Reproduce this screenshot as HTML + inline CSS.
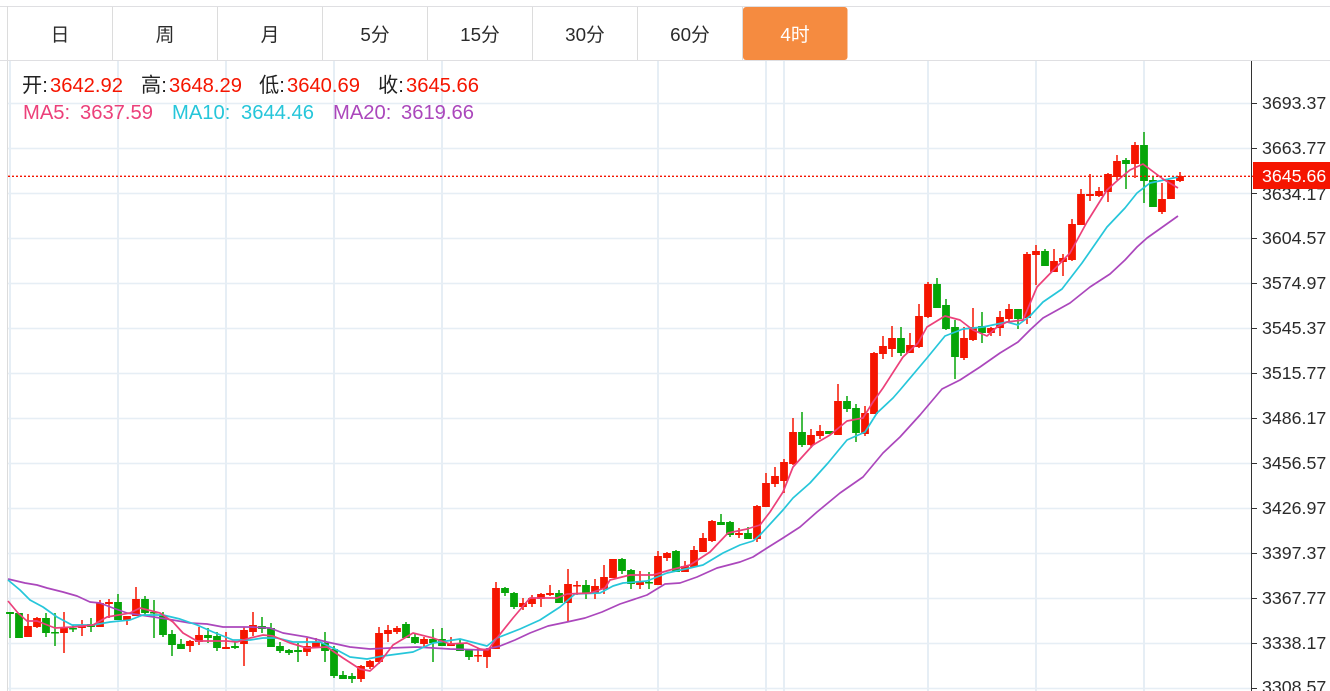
<!DOCTYPE html>
<html><head><meta charset="utf-8"><title>K</title>
<style>
html,body{margin:0;padding:0;background:#fff;width:1330px;height:691px;overflow:hidden}
svg{display:block}
text{font-family:"Liberation Sans","Noto Sans CJK SC",sans-serif}
.t{font-size:18.800px;fill:#2b2b2b;text-anchor:middle}
.a{font-size:17.800px;fill:#2b2b2b}
.h{font-size:20.200px}
</style></head><body>
<svg width="1330" height="691" viewBox="0 0 1330 691" xmlns="http://www.w3.org/2000/svg">
<rect width="1330" height="691" fill="#fff"/>
<!-- grid -->
<path fill="none" stroke="#e6eef5" stroke-width="1.500" d="M8 103.500H1251M8 148.500H1251M8 193.500H1251M8 238.500H1251M8 283.500H1251M8 328.500H1251M8 373.500H1251M8 418.500H1251M8 463.500H1251M8 508.500H1251M8 553.500H1251M8 598.500H1251M8 643.500H1251M8 688.500H1251"/>
<path fill="none" stroke="#e6eef5" stroke-width="2" d="M10 61V691M118 61V691M226 61V691M334 61V691M442 61V691M658 61V691M766 61V691M784 61V691M928 61V691M1036 61V691M1144 61V691"/>
<path fill="none" stroke="#dcdcdc" stroke-width="1" d="M7.500 61V691"/>
<!-- tabs -->
<path fill="none" stroke="#dfdfe2" stroke-width="1" d="M0 6.500H1330M0 60.500H1330"/>
<path fill="none" stroke="#dcdcdc" stroke-width="1" d="M7.500 6V60M112.500 7V60M217.500 7V60M322.500 7V60M427.500 7V60M532.500 7V60M637.500 7V60M742.500 7V60"/>
<rect x="743" y="7" width="104.500" height="53" rx="3" fill="#f58b40"/>
<text class="t" x="60" y="41">日</text>
<text class="t" x="165" y="41">周</text>
<text class="t" x="270" y="41">月</text>
<text class="t" x="375" y="41">5分</text>
<text class="t" x="480" y="41">15分</text>
<text class="t" x="585" y="41">30分</text>
<text class="t" x="690" y="41">60分</text>
<text class="t" x="795" y="41" style="fill:#fff">4时</text>
<!-- wicks -->
<path fill="none" stroke="#06a508" stroke-width="1.500" d="M10 612V638M19 613V638M46 613V637M55 613V646M73 625V632M91 618V632M118 594V620M145 596V615M154 600V638M163 612V637M172 630V656M181 639V649M208 628V643M217 632V651M235 642V649M262 617V633M271 623V647M280 642V653M289 649V655M298 643V662M325 632V662M334 646V678M343 671V679M352 673V683M406 622V638M415 633V644M433 629V662M442 628V646M460 640V651M469 650V660M505 587V596M514 592V609M559 590V603M586 580V599M622 558V574M631 569V589M649 572V589M676 550V572M721 514V525M730 521V537M748 527V539M802 412V447M829 431V434M847 396V412M856 404V442M901 327V356M937 278V308M946 299V330M955 320V379M982 312V343M1018 309V329M1045 249V266M1126 158V189M1144 132V203M1153 177V207"/>
<path fill="none" stroke="#f51500" stroke-width="1.500" d="M28 614V637M37 617V628M64 612V653M82 620V636M100 600V627M109 599V618M127 616V625M136 587V616M190 640V652M199 627V645M226 632V649M244 627V666M253 612V636M307 638V656M316 638V648M361 665V682M370 660V669M379 627V664M388 625V642M397 626V634M424 637V647M451 637V646M478 648V662M487 648V668M496 582V649M523 598V610M532 595V607M541 593V607M550 585V596M568 569V622M577 581V595M595 579V599M604 565V594M613 559V578M640 571V589M658 551V585M667 552V561M685 561V572M694 546V567M703 533V552M712 520V542M739 528V538M757 505V542M766 473V507M775 467V487M784 459V493M793 418V465M811 429V448M820 425V439M838 384V435M865 406V436M874 352V414M883 336V359M892 326V357M910 333V353M919 304V348M928 282V318M964 327V360M973 308V341M991 327V336M1000 311V336M1009 304V322M1027 252V324M1036 245V285M1054 249V272M1063 254V276M1072 219V261M1081 189V225M1090 174V201M1099 187V197M1108 173V202M1117 155V180M1135 142V178M1162 183V214M1171 180V199M1180 172V182"/>
<!-- bodies -->
<path fill="none" stroke="#06a508" stroke-width="7.800" d="M10 612V614M19 613V638M46 618V633M55 632V633.500M73 628V629.500M91 624V627M118 602V620M145 599V613M154 612V613.500M163 615V635M172 634V645M181 644V649M208 635V638M217 636V648M235 646V648M262 626V629M271 628V647M280 646V651M289 650V653M298 650V652M325 643V651M334 649V676M343 675V679M352 676V679M406 624V638M415 637V643M433 639V643M442 639V646M460 644V651M469 650V657M505 588V593M514 593V607M559 593V603M586 585V593M622 559V571M631 570V584M649 582V583.500M676 551V572M721 522V525M730 522V535M748 533V539M802 432V445M829 431V434M847 401V409M856 408V433M901 338V353M937 284V308M946 305V329M955 327V357M982 326V333M1018 309V319M1045 251V266M1126 160V164M1144 145V181M1153 180V207"/>
<path fill="none" stroke="#f51500" stroke-width="7.800" d="M28 626V637M37 618V627M64 627V633M82 625V628M100 603V627M109 602V604M127 616V620M136 599V616M190 641V646M199 635V642M226 647V649M244 630V644M253 625V632M307 646V652M316 642V648M361 666V679M370 661V667M379 633V662M388 630V634M397 628V632M424 639V644M451 643V646M478 655V656.500M487 649V657M496 588V649M523 603V607M532 598V604M541 594V599M550 593V595M568 584V603M577 585V586.500M595 586V593M604 577V589M613 559V578M640 582V585M658 556V585M667 553V558M685 566V572M694 550V567M703 538V552M712 521V541M739 533V535M757 506V539M766 483V507M775 476V484M784 462V481M793 432V464M811 435V445M820 431V436M838 401V435M865 413V434M874 353V414M883 346V354M892 338V349M910 345V353M919 316V347M928 284V317M964 338V358M973 327V340M991 328V333M1000 317V328M1009 309V319M1027 254V318M1036 251V255M1054 261V272M1063 258V262M1072 224V260M1081 194V225M1090 194V196M1099 191V196M1108 174V192M1117 161V177M1135 145V164M1162 199V212M1171 180V199M1180 176V181"/>
<!-- MA lines -->
<polyline fill="none" stroke="#ab47bc" stroke-width="1.700" stroke-linejoin="round" points="8,579 25,583 37,585 47,588 63,592 77,596 90,602 100,603 113,608 127,613 147,616 167,619 190,623 207,624 223,627 250,627 270,628 283,633 307,637 327,642 350,647 370,649 390,648 417,647 450,649 483,650 500,646 515,640 530,633 548,626 567,622 585,618 602,612 620,604 647,595 665,584 680,583 697,577 717,568 740,562 753,557 767,548 783,538 800,527 817,512 840,493 863,477 883,453 900,437 920,415 942,389 960,380 980,367 1000,353 1018,342 1031,329 1043,318 1070,303 1090,287 1110,274 1125,260 1137,247 1147,238 1178,216"/>
<polyline fill="none" stroke="#26c6da" stroke-width="1.700" stroke-linejoin="round" points="8,580 20,590 30,600 43,607 57,617 72,625 93,625 110,622 130,620 143,615 163,615 180,619 197,625 213,632 233,640 250,640 263,638 277,638 293,642 320,642 337,650 350,657 367,659 383,656 413,652 433,643 460,639 487,646 497,638 520,629 540,620 560,607 575,594 600,593 613,586 623,583 647,581 667,573 690,568 703,565 723,553 740,545 753,541 760,535 783,510 793,498 810,483 828,463 847,440 865,432 877,413 893,398 900,390 927,358 945,336 963,329 983,327 1007,322 1018,325 1030,316 1043,302 1062,289 1082,263 1107,227 1125,208 1137,193 1150,183 1178,177"/>
<polyline fill="none" stroke="#ec407a" stroke-width="1.700" stroke-linejoin="round" points="8,601 18,613 27,621 37,621 55,628 73,627 93,625 107,617 130,613 140,608 160,613 173,622 183,633 197,641 227,641 237,642 250,638 263,635 273,636 290,643 307,648 327,647 343,658 360,669 370,671 380,662 393,645 413,633 433,638 450,644 467,643 480,649 488,650 497,638 513,618 530,598 557,598 567,594 590,593 605,588 610,580 630,575 653,575 670,570 690,565 710,552 728,533 747,529 760,525 770,512 783,492 793,467 813,445 830,435 847,421 863,418 873,402 883,388 903,357 918,343 927,327 945,316 960,320 973,330 987,336 997,327 1007,322 1023,320 1037,287 1070,253 1087,222 1107,190 1118,180 1130,170 1143,164 1163,179 1178,188"/>
<!-- axis -->
<path fill="none" stroke="#333" stroke-width="1" d="M1251.500 61V691M1251 103.500H1257M1251 148.500H1257M1251 193.500H1257M1251 238.500H1257M1251 283.500H1257M1251 328.500H1257M1251 373.500H1257M1251 418.500H1257M1251 463.500H1257M1251 508.500H1257M1251 553.500H1257M1251 598.500H1257M1251 643.500H1257M1251 688.500H1257"/>
<g>
<text class="a" x="1262" y="109">3693.37</text>
<text class="a" x="1262" y="154">3663.77</text>
<text class="a" x="1262" y="200">3634.17</text>
<text class="a" x="1262" y="244">3604.57</text>
<text class="a" x="1262" y="289">3574.97</text>
<text class="a" x="1262" y="334">3545.37</text>
<text class="a" x="1262" y="379">3515.77</text>
<text class="a" x="1262" y="424">3486.17</text>
<text class="a" x="1262" y="469">3456.57</text>
<text class="a" x="1262" y="514">3426.97</text>
<text class="a" x="1262" y="559">3397.37</text>
<text class="a" x="1262" y="604">3367.77</text>
<text class="a" x="1262" y="649">3338.17</text>
<text class="a" x="1262" y="693">3308.57</text>
</g>
<!-- price line -->
<path fill="none" stroke="#f51500" stroke-width="1.400" stroke-dasharray="2 2" d="M8 176.300H1253"/>
<rect x="1253" y="162" width="77" height="27" fill="#f51500"/>
<text class="a" x="1262" y="182" style="fill:#fff">3645.66</text>
<!-- header -->
<g class="h">
<text x="22" y="92" fill="#222">开:</text><text x="50" y="92" fill="#f51500">3642.92</text>
<text x="141" y="92" fill="#222">高:</text><text x="169" y="92" fill="#f51500">3648.29</text>
<text x="259" y="92" fill="#222">低:</text><text x="287" y="92" fill="#f51500">3640.69</text>
<text x="378" y="92" fill="#222">收:</text><text x="406" y="92" fill="#f51500">3645.66</text>
<text x="23" y="119" fill="#ec407a">MA5:</text><text x="80" y="119" fill="#ec407a">3637.59</text>
<text x="172" y="119" fill="#26c6da">MA10:</text><text x="241" y="119" fill="#26c6da">3644.46</text>
<text x="333" y="119" fill="#ab47bc">MA20:</text><text x="401" y="119" fill="#ab47bc">3619.66</text>
</g>
</svg>
</body></html>
